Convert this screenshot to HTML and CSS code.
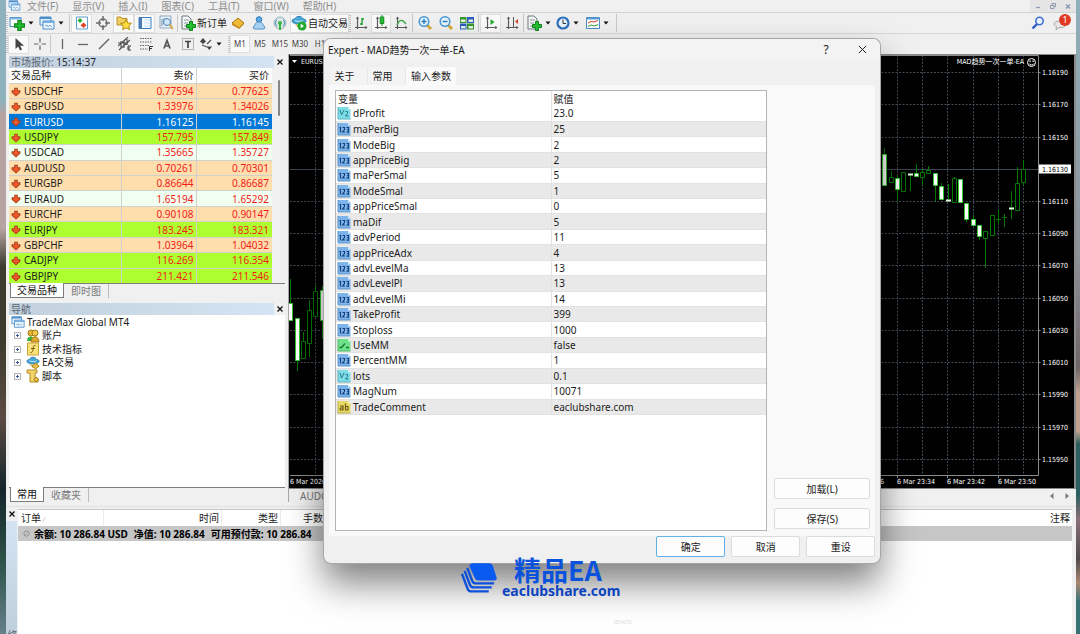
FILE: index.html
```html
<!DOCTYPE html>
<html lang="zh-CN">
<head>
<meta charset="utf-8">
<title>TradeMax Global MT4</title>
<link rel="stylesheet" href="styles.css">
</head>
<body>
<svg class="defs" aria-hidden="true">
  <symbol id="down" viewBox="0 0 10 10"><path d="M3.2.8h3.6v2.400h2.600v2.400L5 9.600.6 5.600V3.200h2.600z" fill="#a8421c"/><path d="M4 1.800h2v2.400h2.200v1L5 8.200 1.800 5.200v-1H4z" fill="#f0582a"/></symbol>
  <symbol id="int" viewBox="0 0 14 14"><path d="M1 1h10l2.500 2.500V13H1z" fill="#7db4ea"/><path d="M11 1l2.500 2.500H11z" fill="#d9edff"/><path d="M1 13h12.500M1 1v12" stroke="#5d94c8" fill="none"/><path d="M2.500 6l1-.6v5M5.500 5.500h2v2l-2 2.500h2.400M9.500 5.500h2v4.600h-2M10 7.700H11.500" stroke="#16407a" stroke-width="1.100" fill="none"/></symbol>
  <symbol id="dbl" viewBox="0 0 14 14"><path d="M1 1h10l2.500 2.500V13H1z" fill="#7fdbe6"/><path d="M11 1l2.500 2.500H11z" fill="#def9fc"/><path d="M1 13h12.500M1 1v12" stroke="#5bb4c0" fill="none"/><path d="M3 4l1.500 5L7 4M8.500 5.500h2v2l-2 2.500h3" stroke="#25808e" fill="none"/></symbol>
  <symbol id="bool" viewBox="0 0 14 14"><path d="M1 1h10l2.500 2.500V13H1z" fill="#6fe08a"/><path d="M11 1l2.500 2.500H11z" fill="#d9fbe0"/><path d="M1 13h12.500M1 1v12" stroke="#50b868" fill="none"/><path d="M2.500 9.500h2L8 5.500M9 9.500h3" stroke="#127a2e" stroke-width="1.300" fill="none"/></symbol>
  <symbol id="str" viewBox="0 0 14 14"><path d="M1 1h10l2.500 2.500V13H1z" fill="#e8d866"/><path d="M11 1l2.500 2.500H11z" fill="#fbf6cc"/><path d="M1 13h12.500M1 1v12" stroke="#bfae48" fill="none"/><path d="M3 6h3v4H3.500L3 9l.5-1H6M8.500 3.500V10H11V6.500H8.500" stroke="#6b5a10" stroke-width="1.200" fill="none"/></symbol>
  <symbol id="caret" viewBox="0 0 6 4"><path d="M.5.500h5L3 3.500z" fill="#111"/></symbol>
  <symbol id="plus" viewBox="0 0 10 10"><path d="M3.500.500h3v3h3v3h-3v3h-3v-3h-3v-3h3z" fill="#25c031" stroke="#0c8418"/></symbol>
  <symbol id="windows" viewBox="0 0 16 14"><path d="M1 1h11v8H1z" fill="#e4f0fb" stroke="#4d8fc9"/><path d="M1 1h11v2H1z" fill="#4d8fc9"/><path d="M4 5h11v8H4z" fill="#eef6fd" stroke="#4d8fc9"/><path d="M4 5h11v2H4z" fill="#76b0e3"/><path d="M6 10l2-1 1 2 2-2 2 2" stroke="#7aa7cf" fill="none"/></symbol>
  <symbol id="axes" viewBox="0 0 16 16"><path d="M4.500 3v11M2 12.500h11" stroke="#5b5b5b" stroke-width="1.200" fill="none"/><path d="M4.500 1.500l1.700 2.200h-3.400zM14.500 12.500l-2.200 1.700v-3.400z" fill="#5b5b5b"/></symbol>
  <symbol id="hat" viewBox="0 0 16 16"><path d="M1 6c0-2 3-2 3-2 1-3.500 7-3.500 8 0 0 0 3 0 3 2s-4 3-7 3-7-1-7-3z" fill="#4aa7d9" stroke="#277cae"/><path d="M4 5.500c2 1.200 6 1.200 8 0" stroke="#c8e8f8" fill="none"/><path d="M4 9l4 5 4-5-4 1z" fill="#d9b046"/></symbol>
  <symbol id="sheetplus" viewBox="0 0 16 16"><path d="M2 1h6l3 3v10H2z" fill="#f6f8f8" stroke="#6a7880"/><path d="M4 5h5M4 8h4M4 11h3" stroke="#8796a0"/><path d="M9.500 6.500h3v3h3v3h-3v3h-3v-3h-3v-3h3z" fill="#25c031" stroke="#0c8418"/></symbol>
</svg>

<div class="desktop">
<div class="app">
  <header>
    <nav class="menubar">
      <svg class="i14" viewBox="0 0 16 14"><use href="#windows"/></svg>
      <a href="#">文件(F)</a><a href="#">显示(V)</a><a href="#">插入(I)</a><a href="#">图表(C)</a><a href="#">工具(T)</a><a href="#">窗口(W)</a><a href="#">帮助(H)</a>
      <div class="mdi">
        <button aria-label="最小化"><svg viewBox="0 0 8 8"><path d="M2 5.500h4" stroke="#8c9bb0" stroke-width="1.200"/></svg></button>
        <button aria-label="还原"><svg viewBox="0 0 8 8"><path d="M1.500 3.500h3.500v3H1.500zM3 3V1.500h3.500v3H5" stroke="#8c9bb0" fill="none"/></svg></button>
        <button aria-label="关闭"><svg viewBox="0 0 8 8"><path d="M2 2.500l4 4m0-4l-4 4" stroke="#8c9bb0" stroke-width="1.500"/></svg></button>
      </div>
    </nav>

    <div class="toolbar main-tools">
      <span class="grip"></span>
      <button class="drop" aria-label="新图表"><svg class="i16" viewBox="0 0 16 16"><path d="M1 2.500h11v9H1z" fill="#fff" stroke="#3d86b8"/><path d="M1 2.500h11v2H1z" fill="#7ab4dd"/><use href="#plus" x="5" y="5" width="11" height="11"/></svg><svg class="car"><use href="#caret"/></svg></button>
      <button class="drop" aria-label="配置文件"><svg class="i16"><use href="#windows"/></svg><svg class="car"><use href="#caret"/></svg></button>
      <span class="sep"></span>
      <button class="tool on" aria-label="市场报价"><svg class="i14" viewBox="0 0 14 14"><path d="M1.500 1h11v12h-11z" fill="#fff" stroke="#5d9fd6"/><path d="M5 2l2.500 2.500L5 7 2.500 4.500z" fill="#27b02f"/><path d="M8.500 6.500l3 2.800-3 2.800-3-2.800z" fill="#e0452a"/></svg></button>
      <button class="tool" aria-label="数据窗口"><svg class="i14" viewBox="0 0 14 14"><circle cx="7" cy="7" r="4" stroke="#6c6c6c" stroke-width="1.500" fill="none"/><path d="M7 0v5M7 9v5M0 7h5M9 7h5" stroke="#6c6c6c" stroke-width="1.500"/></svg></button>
      <button class="tool on" aria-label="导航"><svg class="i16" viewBox="0 0 16 16"><path d="M1 2h4l1 1.500h5V10H1z" fill="#f2cf63" stroke="#b8912c"/><path d="M10 4.500l1.700 3.400 3.800.4-2.800 2.600.8 3.800-3.500-1.900-3.400 1.900.7-3.800-2.800-2.600 3.800-.4z" fill="#ffdc3c" stroke="#b58a14"/></svg></button>
      <button class="tool on" aria-label="终端"><svg class="i14" viewBox="0 0 14 14"><path d="M1 1.500h12v11H1z" fill="#f4f9ff" stroke="#3a7fc4"/><path d="M1 1.500h3v11H1z" fill="#4a78b4"/><path d="M6 4h6M6 7h6M6 10h6" stroke="#cfe2f5"/></svg></button>
      <button class="tool" aria-label="策略测试"><svg class="i16" viewBox="0 0 16 16"><path d="M2 1h11v12H2z" fill="#e9f1f8" stroke="#8fa8bd"/><path d="M4 11V4M6 9V3" stroke="#6b8dac"/><circle cx="9" cy="7" r="3.500" fill="#cfe6fa" stroke="#4c83b5"/><path d="M11.500 9.500L15 14" stroke="#d6a83e" stroke-width="2"/></svg></button>
      <span class="sep"></span>
      <button class="wide order"><svg class="i16"><use href="#sheetplus"/></svg>新订单</button>
      <button class="tool" aria-label="MetaEditor"><svg class="i14" viewBox="0 0 14 14"><path d="M1 7l6-5 6 5-5 5z" fill="#efb938" stroke="#a97412"/><path d="M1 7v2l7 4 5-5V7l-5 5z" fill="#c98e1c"/></svg></button>
      <button class="tool" aria-label="社区"><svg class="i14" viewBox="0 0 14 14"><circle cx="7" cy="3.500" r="2.800" fill="#5ea9e2" stroke="#2d78b8"/><path d="M3 9c0-4 8-4 8 0l2 2-1 2H2l-1-2z" fill="#a9d2f2" stroke="#5292c8"/></svg></button>
      <button class="tool" aria-label="信号"><svg class="i14" viewBox="0 0 14 14"><circle cx="7" cy="7" r="6" fill="#dce8ec" stroke="#9ab0ba"/><path d="M4 3.500a5 5 0 0 0 0 7M10 3.500a5 5 0 0 1 0 7" stroke="#4a8ab0" fill="none"/><circle cx="7" cy="7" r="2" fill="#3eb546"/><path d="M7 7v7" stroke="#3eb546" stroke-width="2"/></svg></button>
      <button class="wide on auto"><svg class="i16" viewBox="0 0 16 16"><use href="#hat"/><circle cx="11" cy="11" r="4.500" fill="#22a82e"/><path d="M9.700 8.800l3.300 2.200-3.300 2.200z" fill="#fff"/></svg>自动交易</button>
      <span class="grip"></span>
      <button class="tool slim" aria-label="柱状图"><svg class="i16" viewBox="0 0 16 16"><use href="#axes"/><path d="M9 3v7M9 4h2M7 9h2" stroke="#1fa02b" stroke-width="1.400"/></svg></button>
      <button class="tool slim on" aria-label="蜡烛图"><svg class="i16" viewBox="0 0 16 16"><use href="#axes"/><path d="M9 0v11" stroke="#168a22"/><path d="M7.200 2h3.600v6.500H7.200z" fill="#25c031" stroke="#168a22"/></svg></button>
      <button class="tool slim" aria-label="折线图"><svg class="i16" viewBox="0 0 16 16"><use href="#axes"/><path d="M4 10c3-7 6-5 9-1" stroke="#35a840" stroke-width="1.300" fill="none"/></svg></button>
      <span class="sep"></span>
      <button class="tool" aria-label="放大"><svg class="i16" viewBox="0 0 16 16"><path d="M10 10l4 4" stroke="#d8a93a" stroke-width="3"/><circle cx="7" cy="6.500" r="4.800" fill="#e3f2fd" stroke="#4a98d8" stroke-width="1.500"/><path d="M4.500 6.500h5M7 4v5" stroke="#2c7fc4" stroke-width="1.400"/></svg></button>
      <button class="tool" aria-label="缩小"><svg class="i16" viewBox="0 0 16 16"><path d="M10 10l4 4" stroke="#d8a93a" stroke-width="3"/><circle cx="7" cy="6.500" r="4.800" fill="#e3f2fd" stroke="#4a98d8" stroke-width="1.500"/><path d="M4.500 6.500h5" stroke="#2c7fc4" stroke-width="1.400"/></svg></button>
      <button class="tool" aria-label="平铺"><svg class="i14" viewBox="0 0 14 14"><path d="M0 1h6.500v6H0z" fill="#35962c"/><path d="M7 1h7v6H7z" fill="#2c5cbc"/><path d="M0 7.500h6.500v6H0z" fill="#2c5cbc"/><path d="M7 7.500h7v6H7z" fill="#35962c"/><path d="M1 3.500h4.500v2.500H1zM8.500 3.500h4.500v2.500H8.500zM1 10h4.500v2.500H1zM8.500 10h4.500v2.500H8.500z" fill="#e4f2e0"/></svg></button>
      <span class="sep"></span>
      <button class="tool on" aria-label="自动滚动"><svg class="i16" viewBox="0 0 16 16"><use href="#axes"/><path d="M7.500 4v6l4-3z" fill="#1fae2c"/></svg></button>
      <button class="tool" aria-label="图表平移"><svg class="i16" viewBox="0 0 16 16"><use href="#axes"/><path d="M9.500 2v10" stroke="#555"/><path d="M11 6.500l3-2.500v5z" fill="#d0462a"/></svg></button>
      <span class="sep"></span>
      <button class="drop" aria-label="指标"><svg class="i16"><use href="#sheetplus"/></svg><svg class="car"><use href="#caret"/></svg></button>
      <button class="drop" aria-label="周期"><svg class="i14" viewBox="0 0 14 14"><circle cx="7" cy="7" r="5.500" fill="#e8f3fd" stroke="#2c70bd" stroke-width="2.200"/><path d="M7 3.500V7.500h3" stroke="#333" fill="none"/></svg><svg class="car"><use href="#caret"/></svg></button>
      <button class="drop" aria-label="模板"><svg class="i14" viewBox="0 0 14 14"><path d="M.5 1.500h13v11H.5z" fill="#fff" stroke="#4a8cc8"/><path d="M.5 1.500h13v2H.5z" fill="#5a9ad2"/><path d="M2 7l3-1.500 3 .5 4-1.500" stroke="#d0462a" fill="none"/><path d="M2 10.500l3-1.500 3 1 4-1.500" stroke="#309c3c" fill="none"/></svg><svg class="car"><use href="#caret"/></svg></button>
      <span class="sep"></span>
      <button class="tool search" aria-label="搜索"><svg class="i14" viewBox="0 0 14 14"><circle cx="8.500" cy="5" r="3.700" fill="#eaf2ff" stroke="#3f6fd0" stroke-width="1.600"/><path d="M6 8l-4.500 4.500" stroke="#2f5cc4" stroke-width="2.400"/></svg></button>
      <button class="tool chat" aria-label="消息"><svg class="i16" viewBox="0 0 16 16"><path d="M1 9c0-4 12-4 12 0 0 3.500-4.500 4-7 3.500l-3 2.500.5-3.500C2 11 1 10.200 1 9z" fill="#e6e6e6" stroke="#a8a8a8"/></svg><span class="badge">1</span></button>
    </div>

    <div class="toolbar line-tools">
      <span class="grip"></span>
      <button class="tool on" aria-label="光标"><svg class="i14" viewBox="0 0 14 14"><path d="M3.500 1v11l2.700-2.500 1.800 4 2-.9-1.800-3.900H12z" fill="#444"/></svg></button>
      <button class="tool" aria-label="十字线"><svg class="i14" viewBox="0 0 14 14"><path d="M7 1v4.500M7 8.500V13M1 7h4.500M8.500 7H13" stroke="#666" stroke-width="1.200"/></svg></button>
      <span class="sep"></span>
      <button class="tool" aria-label="垂直线"><svg class="i14" viewBox="0 0 14 14"><path d="M7.500 2v10" stroke="#666" stroke-width="1.300"/></svg></button>
      <button class="tool" aria-label="水平线"><svg class="i14" viewBox="0 0 14 14"><path d="M2 7.500h10" stroke="#666" stroke-width="1.300"/></svg></button>
      <button class="tool" aria-label="趋势线"><svg class="i14" viewBox="0 0 14 14"><path d="M2 12L12 2" stroke="#666" stroke-width="1.400"/></svg></button>
      <button class="tool" aria-label="通道"><svg class="i14" viewBox="0 0 14 14"><path d="M0 9L10 0M1 13L12 3M3 4v7M6 3v8M9 2v6M0 6h10" stroke="#555" stroke-width="1.200"/><path d="M13 9h-3v4h3M10 11h2" stroke="#333" fill="none"/></svg></button>
      <button class="tool" aria-label="斐波那契"><svg class="i14" viewBox="0 0 14 14"><path d="M1 1.500h12M1 5h12M1 8.500h9M1 12h8" stroke="#666" stroke-dasharray="1.500 1"/><path d="M10.500 14V9.500H14M10.500 11.500H13" stroke="#333" fill="none"/></svg></button>
      <button class="tool" aria-label="文字"><svg class="i14" viewBox="0 0 14 14"><path d="M4 11.500L7 3.500l3 8M5 9h4" stroke="#555" stroke-width="1.700" fill="none"/></svg></button>
      <button class="tool" aria-label="文字标签"><svg class="i14" viewBox="0 0 14 14"><path d="M1.500 1.500h11v11h-11z" stroke="#777" stroke-dasharray="1 1" fill="none"/><path d="M4 4.500h6M7 4.500V11" stroke="#444" stroke-width="1.700"/></svg></button>
      <button class="drop" aria-label="箭头"><svg class="i14" viewBox="0 0 14 14"><path d="M1 4.500L4 1l3 3.500L4 7z" fill="#444"/><path d="M7.500 9.500h5.500L10.200 13z" fill="#444"/><path d="M3 8l5 2M8 7l4-4" stroke="#555" stroke-width="1.300"/></svg><svg class="car"><use href="#caret"/></svg></button>
      <span class="grip"></span>
      <button class="period on">M1</button><button class="period">M5</button><button class="period">M15</button><button class="period">M30</button><button class="period">H1</button>
    </div>
  </header>

  <main class="work">
    <aside class="side">
      <div class="title"><h2>市场报价: <b>15:14:37</b></h2><button class="close" aria-label="关闭市场报价"><svg viewBox="0 0 6 6"><path d="M.5.500l5 5m0-5l-5 5" stroke="#111" stroke-width="1.300"/></svg></button></div>
      <div class="watch">
        <table class="quotes">
          <thead><tr><th>交易品种</th><th>卖价</th><th>买价</th></tr></thead>
          <tbody>
            <tr class="tan"><td><svg><use href="#down"/></svg>USDCHF</td><td>0.77594</td><td>0.77625</td></tr>
            <tr class="tan"><td><svg><use href="#down"/></svg>GBPUSD</td><td>1.33976</td><td>1.34026</td></tr>
            <tr class="sel"><td><svg><use href="#down"/></svg>EURUSD</td><td>1.16125</td><td>1.16145</td></tr>
            <tr class="lime"><td><svg><use href="#down"/></svg>USDJPY</td><td>157.795</td><td>157.849</td></tr>
            <tr class="mint"><td><svg><use href="#down"/></svg>USDCAD</td><td>1.35665</td><td>1.35727</td></tr>
            <tr class="tan"><td><svg><use href="#down"/></svg>AUDUSD</td><td>0.70261</td><td>0.70301</td></tr>
            <tr class="tan"><td><svg><use href="#down"/></svg>EURGBP</td><td>0.86644</td><td>0.86687</td></tr>
            <tr class="mint"><td><svg><use href="#down"/></svg>EURAUD</td><td>1.65194</td><td>1.65292</td></tr>
            <tr class="tan"><td><svg><use href="#down"/></svg>EURCHF</td><td>0.90108</td><td>0.90147</td></tr>
            <tr class="lime"><td><svg><use href="#down"/></svg>EURJPY</td><td>183.245</td><td>183.321</td></tr>
            <tr class="tan"><td><svg><use href="#down"/></svg>GBPCHF</td><td>1.03964</td><td>1.04032</td></tr>
            <tr class="lime"><td><svg><use href="#down"/></svg>CADJPY</td><td>116.269</td><td>116.354</td></tr>
            <tr class="lime"><td><svg><use href="#down"/></svg>GBPJPY</td><td>211.421</td><td>211.546</td></tr>
          </tbody>
        </table>
        <div class="scroll"><span></span></div>
      </div>
      <div class="tabs"><button class="tab cur">交易品种</button><button class="tab">即时图</button></div>

      <div class="title nav-title"><h2>导航</h2><button class="close" aria-label="关闭导航"><svg viewBox="0 0 6 6"><path d="M.5.500l5 5m0-5l-5 5" stroke="#111" stroke-width="1.300"/></svg></button></div>
      <div class="tree">
        <div class="root"><svg class="i14"><use href="#windows"/></svg>TradeMax Global MT4</div>
        <ul>
          <li><span class="exp"></span><svg class="i14" viewBox="0 0 14 14"><circle cx="5" cy="4" r="3" fill="#e3b53a" stroke="#a87c14"/><path d="M1 12c0-6 7-6 8 0z" fill="#36b03c"/><circle cx="9" cy="4" r="3" fill="#f0c94e" stroke="#a87c14"/><path d="M5 13c0-7 8-7 8 0z" fill="#dca82c" stroke="#a87c14"/></svg>账户</li>
          <li><span class="exp"></span><svg class="i14" viewBox="0 0 14 14"><path d="M1.500 1h11v12h-11z" fill="#f8e27a" stroke="#c9a236"/><path d="M9.500 3.500C7 3 7.500 5 7 7s-.5 4-2.500 3.500M5 6.500h4" stroke="#7a5a10" fill="none"/></svg>技术指标</li>
          <li><span class="exp"></span><svg class="i14" viewBox="0 0 16 16"><use href="#hat"/><path d="M11 8l4 3.500-4 3.500-4-3.500z" fill="#e9c04a" stroke="#a87c14"/></svg>EA交易</li>
          <li><span class="exp"></span><svg class="i14" viewBox="0 0 14 14"><path d="M1 1h10v3H9v6h3v3H4V4H1z" fill="#f3d468" stroke="#b38b24"/><path d="M10 8l3 2.500-3 2.500-2-2.500z" fill="#e9c04a" stroke="#a87c14"/></svg>脚本</li>
        </ul>
      </div>
      <div class="tabs"><button class="tab cur">常用</button><button class="tab">收藏夹</button></div>
    </aside>

    <section class="charts">
      <div class="chart">
        <svg class="plot" viewBox="289 55 785 433" width="785" height="433" role="img" aria-label="EURUSD M1">
          <g stroke="#424c56" stroke-dasharray="2 1.500" fill="none">
            <path d="M290 72.500h748M290 104.500h748M290 137.500h748M290 201.500h748M290 233.500h748M290 265.500h748M290 298.500h748M290 330.500h748M290 362.500h748M290 394.500h748M290 427.500h748M290 459.500h748"/>
            <path d="M315.500 55v420M897.500 55v420M922.500 55v420M947.500 55v420M973.500 55v420M998.500 55v420M1023.500 55v420"/>
          </g>
          <path d="M290 169.500h748" stroke="#3c4650" fill="none"/>
          <path d="M290 55.500h748.500V475.500H290M1038.500 72.500h2M1038.500 104.500h2M1038.500 137.500h2M1038.500 201.500h2M1038.500 233.500h2M1038.500 265.500h2M1038.500 298.500h2M1038.500 330.500h2M1038.500 362.500h2M1038.500 394.500h2M1038.500 427.500h2M1038.500 459.500h2M897.500 475v3M947.500 475v3M998.500 475v3" stroke="#8c8c8c" fill="none"/>
          <g stroke="#007a00" fill="none">
            <path d="M290.500 279v24M297.500 361v10M303.500 332v9M309.500 300v10M309.500 343v14M315.500 285v6M322.500 286v53M880.500 135v18M884.500 148v6M891.500 171v6M897.500 175v26M910.500 175v16M916.500 164v9M922.500 169v3M922.500 177v8M928.500 166v4M935.500 185v16M941.500 183v3M948.500 184v15M954.500 177v1M966.500 219v3M973.500 215v4M979.500 237v3M985.500 239v29M998.500 210v14M996 219.500h5M1004.500 214v13M1002 217.500h5M1011.500 191v28M1017.500 167v16M1023.500 160v9M1023.500 182v3"/>
          </g>
          <g fill="#000" stroke="#007a00">
            <path d="M301.500 341.500h4v17h-4zM307.500 310.500h4v33h-4zM313.500 291.500h4v25h-4zM889.500 177.500h4v5h-4zM901.500 172.500h4v19h-4zM920.500 172.500h4v5h-4zM926.500 170.500h4v3h-4zM952.500 178.500h4v24h-4zM983.500 231.500h4v7h-4zM990.500 215.500h4v20h-4zM1015.500 183.500h4v27h-4zM1021.500 169.500h4v13h-4z"/>
          </g>
          <g fill="#fff" stroke="#33c933">
            <path d="M288.500 303.500h4v17h-4zM295.500 318.500h4v42h-4zM320.500 290.500h4v30h-4zM882.500 154.500h4v31h-4zM895.500 178.500h4v11h-4zM914.500 173.500h4v3h-4zM933.500 173.500h4v12h-4zM939.500 186.500h4v13h-4zM958.500 179.500h4v23h-4zM964.500 203.500h4v16h-4zM971.500 219.500h4v6h-4zM977.500 225.500h4v11h-4z"/>
          </g>
          <path d="M908 174.500h5M946 200.500h5M1009 208.500h5" stroke="#dfffdf" stroke-width="2"/>
          <path d="M292 60h5l-2.500 3z" fill="#fff"/>
          <g class="axis">
            <text x="301" y="64">EURUSD,M1</text>
            <text x="1024" y="64" text-anchor="end">MAD趋势一次一单-EA</text>
            <text x="1042" y="75">1.16190</text><text x="1042" y="107">1.16170</text><text x="1042" y="140">1.16150</text>
            <text x="1042" y="204">1.16110</text><text x="1042" y="236">1.16090</text><text x="1042" y="268">1.16070</text>
            <text x="1042" y="301">1.16050</text><text x="1042" y="333">1.16030</text><text x="1042" y="365">1.16010</text>
            <text x="1042" y="397">1.15990</text><text x="1042" y="430">1.15970</text><text x="1042" y="462">1.15950</text>
            <text x="290" y="484">6 Mar 2026</text><text x="846" y="484">6 Mar 23:26</text>
            <text x="897" y="484">6 Mar 23:34</text><text x="947" y="484">6 Mar 23:42</text><text x="998" y="484">6 Mar 23:50</text>
          </g>
          <path d="M1039 164.500h32v9h-32z" fill="#fff"/><text class="now" x="1042" y="172">1.16130</text>
          <g fill="none" stroke="#fff"><circle cx="1031.500" cy="62.500" r="4"/><path d="M1029 63.500c1 2 4 2 5 0"/></g><path d="M1029.500 60.500h1.200v1.500h-1.200zM1032.500 60.500h1.200v1.500h-1.200z" fill="#fff"/>
        </svg>
      </div>
      <div class="chart-tabs"><a href="#">AUDCAD,M1</a><span class="arrows"><svg viewBox="0 0 24 8"><path d="M5.500 1v6L2 4zM17.500 1v6L21 4z" fill="#777"/></svg></span></div>
    </section>
  </main>

  <section class="terminal">
    <div class="rail"><button class="close" aria-label="关闭终端"><svg viewBox="0 0 6 6"><path d="M.5.500l5 5m0-5l-5 5" stroke="#111" stroke-width="1.300"/></svg></button><div class="rail-name">终端</div></div>
    <div class="orders">
      <div class="cols"><span class="c1">订单 <i>⁄</i></span><span class="c2">时间</span><span class="c3">类型</span><span class="c4">手数</span><span class="c5">注释</span></div>
      <div class="balance"><svg viewBox="0 0 8 8"><circle cx="4" cy="4" r="3" fill="#ccc" stroke="#8a8a8a"/><path d="M2.500 5.500l3-3" stroke="#8a8a8a"/></svg><span>余额: 10 286.84 USD</span><span>净值: 10 286.84</span><span>可用预付款: 10 286.84</span></div>
    </div>
  </section>
</div>
</div>

<div class="dialog" role="dialog" aria-labelledby="dlg-title">
  <div class="dlg-head"><h1 id="dlg-title">Expert - MAD趋势一次一单-EA</h1><button aria-label="帮助">?</button><button aria-label="关闭"><svg viewBox="0 0 10 10"><path d="M1 1l8 8M9 1L1 9" stroke="#222" stroke-width="1.100"/></svg></button></div>
  <div class="dlg-tabs"><button>关于</button><button>常用</button><button class="cur">输入参数</button></div>
  <div class="dlg-body">
    <div class="list">
      <table class="params">
        <thead><tr><th>变量</th><th>赋值</th></tr></thead>
        <tbody>
          <tr><td><svg><use href="#dbl"/></svg>dProfit</td><td>23.0</td></tr>
          <tr><td><svg><use href="#int"/></svg>maPerBig</td><td>25</td></tr>
          <tr><td><svg><use href="#int"/></svg>ModeBig</td><td>2</td></tr>
          <tr><td><svg><use href="#int"/></svg>appPriceBig</td><td>2</td></tr>
          <tr><td><svg><use href="#int"/></svg>maPerSmal</td><td>5</td></tr>
          <tr><td><svg><use href="#int"/></svg>ModeSmal</td><td>1</td></tr>
          <tr><td><svg><use href="#int"/></svg>appPriceSmal</td><td>0</td></tr>
          <tr><td><svg><use href="#int"/></svg>maDif</td><td>5</td></tr>
          <tr><td><svg><use href="#int"/></svg>advPeriod</td><td>11</td></tr>
          <tr><td><svg><use href="#int"/></svg>appPriceAdx</td><td>4</td></tr>
          <tr><td><svg><use href="#int"/></svg>advLevelMa</td><td>13</td></tr>
          <tr><td><svg><use href="#int"/></svg>advLevelPl</td><td>13</td></tr>
          <tr><td><svg><use href="#int"/></svg>advLevelMi</td><td>14</td></tr>
          <tr><td><svg><use href="#int"/></svg>TakeProfit</td><td>399</td></tr>
          <tr><td><svg><use href="#int"/></svg>Stoploss</td><td>1000</td></tr>
          <tr><td><svg><use href="#bool"/></svg>UseMM</td><td>false</td></tr>
          <tr><td><svg><use href="#int"/></svg>PercentMM</td><td>1</td></tr>
          <tr><td><svg><use href="#dbl"/></svg>lots</td><td>0.1</td></tr>
          <tr><td><svg><use href="#int"/></svg>MagNum</td><td>10071</td></tr>
          <tr><td><svg><use href="#str"/></svg>TradeComment</td><td>eaclubshare.com</td></tr>
        </tbody>
      </table>
    </div>
    <div class="files"><button class="btn">加载(L)</button><button class="btn">保存(S)</button></div>
  </div>
  <div class="dlg-foot"><button class="btn primary">确定</button><button class="btn">取消</button><button class="btn">重设</button></div>
</div>

<div class="brand">
  <svg viewBox="60 65 115 95"><path d="M97 68h52q7 0 10 7l12 37q1 8-6 8h-50q-7 0-10-7L89 78q-2-8 8-10z" fill="#0a5af0"/><g fill="none" stroke="#0a50dc" stroke-width="7"><path d="M82 82l15 39q3 8 11 8h55"/><path d="M74 91l16 42q3 8 11 8h55"/><path d="M66 100l17 45q3 8 11 8h53"/></g></svg>
  <div><strong>精品EA</strong><span>eaclubshare.com</span></div>
</div>
<div class="mark">IEXAITE</div>
</body>
</html>
```
FILE: styles.css
```css
* { box-sizing: border-box; }
body {
  margin: 0;
  min-height: 100vh;
  overflow: hidden;
  font: 10px/14px "Noto Sans", "Noto Sans CJK SC", sans-serif;
  color: #1c1c1c;
}
button {
  margin: 0;
  padding: 0;
  border: 0;
  background: none;
  font: inherit;
  color: inherit;
}
a { color: inherit; text-decoration: none; }
h1, h2 { margin: 0; font: inherit; }
svg { flex: none; display: block; }
.defs { display: none; }
.i14 { width: 14px; height: 14px; }
.i16 { width: 16px; height: 16px; }

.desktop {
  height: 100vh;
  padding: 0 4px 0 6px;
  display: flex;
  background:
    linear-gradient(#8fb1bb 0 16%, #b7a4a2 18% 36%, #3d3c2e 42% 54%, #5b4a42 66%, #16262c 77%, #2c5046 88%, #64808a) left / 6px 100% no-repeat,
    linear-gradient(#8fb0bc, #8e9299 40%, #6e6468 58%, #c0a28e 62% 68%, #2c5f60 70% 78%, #8c6f78 82%, #4d4a4c 88%, #a98670 92%, #347276 95%) right / 4px 100% no-repeat;
}
.app {
  flex: 1;
  min-width: 0;
  display: flex;
  flex-direction: column;
  background: #f0f0f0;
}

/* menu and toolbars */
.menubar {
  height: 13px;
  padding-left: 2px;
  display: flex;
  align-items: flex-start;
  line-height: 12px;
  border-bottom: 1px solid #d2d2d2;
  color: #8d8d8d;
}
.menubar > svg { width: 13px; height: 11px; }
.menubar a { margin: 0 8px 0 6px; }
.mdi {
  margin-left: auto;
  width: 46px;
  height: 12px;
  display: flex;
  justify-content: space-around;
  align-items: center;
  background: #e5e5e5;
}
.mdi button, .mdi svg { width: 8px; height: 8px; }
.toolbar {
  height: 21px;
  display: flex;
  align-items: center;
  white-space: nowrap;
}
.main-tools { border-bottom: 1px solid #d6d6d6; }
.line-tools { height: 20px; }
.grip {
  width: 2px;
  height: 17px;
  background: repeating-linear-gradient(#c2c2c2 0 1px, #f0f0f0 1px 2px);
}
.sep { width: 1px; height: 18px; margin: 0 1px; background: #c8c8c8; }
.line-tools .sep { margin: 0; }
.tool {
  width: 21px;
  height: 19px;
  display: flex;
  align-items: center;
  justify-content: center;
}
.slim { width: 20px; }
.drop {
  width: 30px;
  height: 19px;
  padding-left: 1px;
  display: flex;
  align-items: center;
  gap: 3px;
}
.car { width: 6px; height: 4px; }
.on { background: #fafafa; box-shadow: inset 0 0 0 1px #dedede; }
.wide { height: 19px; display: flex; align-items: center; gap: 1px; }
.order { padding-left: 1px; }
.auto { padding: 0 1px; }
.search { margin-left: auto; }
.chat { position: relative; margin: 0 5px 0 2px; }
.badge {
  position: absolute;
  right: 0;
  top: 0;
  width: 12px;
  height: 12px;
  border-radius: 6px;
  background: #e03a24;
  color: #fff;
  font-size: 9px;
  line-height: 12px;
}
.period {
  width: 20px;
  height: 18px;
  font-size: 8px;
  color: #444;
}

/* left column */
.work { display: flex; }
.side {
  width: 283px;
  padding: 1px 3px 0;
  border-right: 1px solid #a8a8a8;
}
.title { height: 13px; display: flex; align-items: center; }
.title h2 {
  flex: 1;
  padding-left: 2px;
  line-height: 12px;
  color: #5a6672;
  background: linear-gradient(90deg, #c2d0de, #d5e4f2);
}
.title b { color: #1e242c; font-weight: 400; }
.close { width: 11px; height: 12px; display: grid; place-items: center; }
.close svg { width: 6px; height: 6px; }
.nav-title { margin-top: 4px; }
.watch {
  height: 215px;
  display: flex;
  overflow: hidden;
  background: #fff;
}
.quotes {
  flex: 1;
  height: 216px;
  table-layout: fixed;
  border-collapse: collapse;
}
.quotes th, .quotes td {
  height: 15px;
  padding: 0 3px 0 0;
  line-height: 14px;
  text-align: right;
  font-weight: 400;
  border: 0 solid #d0d0cc;
  border-width: 0 0 1px 1px;
}
.quotes th:first-child, .quotes td:first-child {
  width: 112px;
  text-align: left;
  padding-left: 2px;
  border-left: 0;
}
.quotes td { color: #f21c1c; }
.quotes td:first-child { color: #1c1c1c; }
.quotes svg {
  display: inline-block;
  vertical-align: middle;
  width: 10px;
  height: 10px;
  margin: 0 3px 1px 0;
}
.tan { background: #ffdead; }
.lime { background: #adff2f; }
.mint { background: #f0fff0; }
.sel { background: #0078d7; }
.quotes .sel td { color: #fff; }
.scroll { width: 13px; padding: 12px 0 0 6px; background: #f0f0f0; }
.scroll span { display: block; width: 2px; height: 36px; border-radius: 1px; background: #858585; }
.tabs {
  height: 15px;
  padding-left: 1px;
  display: flex;
  border-top: 1px solid #7c7c7c;
}
.tab {
  padding: 0 7px;
  height: 14px;
  line-height: 13px;
  color: #7c7c7c;
  border-right: 1px solid #bdbdbd;
}
.tab.cur {
  margin-top: -1px;
  padding: 0 6px;
  height: 15px;
  color: #111;
  background: #fff;
  border: 1px solid #7c7c7c;
  border-top: 0;
}
.tree { height: 172px; background: #fff; }
.root { height: 14px; padding-left: 2px; display: flex; align-items: center; gap: 2px; }
.tree ul { margin: 0; padding: 0 0 0 5px; list-style: none; }
.tree li { height: 13px; line-height: 13px; display: flex; align-items: center; gap: 2px; }
.tree li:nth-child(even) { height: 14px; }
.exp {
  width: 7px;
  height: 7px;
  margin-right: 3px;
  border: 1px solid #b4b4b4;
  background:
    linear-gradient(#3c5a9c, #3c5a9c) center / 3px 1px no-repeat,
    linear-gradient(#3c5a9c, #3c5a9c) center / 1px 3px no-repeat,
    #fff;
}

/* charts */
.charts { flex: 1; min-width: 0; }
.chart {
  height: 435px;
  display: flex;
  justify-content: flex-end;
  overflow: hidden;
  background: #000;
  border: solid #8a8a8a;
  border-width: 1px 2px 1px 0;
}
.axis text, .now {
  font: 7px "DejaVu Sans Condensed", "DejaVu Sans", "Noto Sans CJK SC", sans-serif;
  fill: #fff;
}
.axis .now, .now { fill: #000; }
.chart-tabs {
  height: 13px;
  padding: 0 4px 0 11px;
  display: flex;
  justify-content: space-between;
  align-items: center;
  color: #777;
}
.arrows svg { width: 24px; height: 8px; }

/* terminal */
.terminal {
  flex: 1;
  min-height: 0;
  margin-top: 4px;
  padding-right: 4px;
  display: flex;
  border-top: 1px solid #e2e2e2;
}
.rail { width: 11px; display: flex; flex-direction: column; }
.rail .close { height: 14px; }
.rail-name {
  flex: 1;
  margin-bottom: -16px;
  text-align: right;
  writing-mode: vertical-rl;
  line-height: 11px;
  color: #5a6672;
  background: linear-gradient(#d5e4f2, #bccbd8);
}
.orders { flex: 1; margin: 2px 0 0 1px; background: #fff; border-top: 1px solid #c6c6c6; }
.cols { height: 16px; display: flex; line-height: 16px; }
.cols span { border-right: 1px solid #ececec; text-align: right; padding-right: 2px; }
.cols i { color: #aaa; font-size: 7px; }
.cols .c1 { width: 86px; text-align: left; padding-left: 3px; }
.cols .c2 { width: 118px; }
.cols .c3 { width: 59px; }
.cols .c4 { width: 45px; }
.cols .c5 { flex: 1; border: 0; }
.balance {
  height: 15px;
  padding-left: 5px;
  display: flex;
  align-items: center;
  gap: 6px;
  font-weight: 700;
  color: #000;
  background: #c6c6c6;
}
.balance svg { width: 7px; height: 7px; margin-right: -2px; }

/* dialog */
.dialog {
  position: absolute;
  left: 30%;
  top: 39px;
  width: 51.5%;
  display: flex;
  flex-direction: column;
  border-radius: 7px;
  background: #f0f0f0;
  box-shadow: 0 0 0 1px #a6a6a6, 0 20px 36px rgba(0, 0, 0, .5);
}
.dlg-head {
  height: 21px;
  padding: 0 4px;
  display: flex;
  align-items: center;
  border-radius: 7px 7px 0 0;
  background: #f3f3f3;
}
.dlg-head h1 { flex: 1; }
.dlg-head button { width: 44px; height: 20px; display: grid; place-items: center; font-size: 12px; }
.dlg-head button:last-child { width: 28px; }
.dlg-head svg { width: 9px; height: 9px; }
.dlg-tabs { height: 25px; padding: 7px 6px 0; display: flex; }
.dlg-tabs button { width: 38px; padding-right: 8px; background: #f3f3f3; border-right: 1px solid #e8e8e8; line-height: 18px; }
.dlg-tabs .cur { width: 50px; padding: 0; background: #fafafa; border: 0; }
.dlg-body {
  margin: 0 5px;
  padding: 5px 5px 5px 6px;
  display: flex;
  gap: 7px;
  background: #f9f9f9;
}
.list { flex: 1; height: 441px; background: #fff; border: 1px solid #b4b4b4; }
.params { width: 100%; height: 324px; table-layout: fixed; border-collapse: collapse; }
.params th, .params td {
  height: 15px;
  padding: 0 0 0 2px;
  line-height: 14px;
  text-align: left;
  font-weight: 400;
}
.params th:first-child, .params td:first-child {
  width: 50%;
  border-right: 1px solid #e2e2e2;
}
.params td:first-child { padding-left: 1px; }
.params tbody tr:nth-child(even) { background: #e9e9e9; }
.params td { border-bottom: 1px solid #e2e2e2; }
.params svg { display: inline-block; vertical-align: top; width: 14px; height: 14px; margin-right: 2px; }
.files { width: 96px; padding-bottom: 2px; display: flex; flex-direction: column; justify-content: flex-end; gap: 9px; }
.btn { height: 21px; border: 1px solid #dcdcdc; border-radius: 2px; background: #fdfdfd; }
.dlg-foot { padding: 0 5px 6px; display: flex; justify-content: flex-end; gap: 6px; }
.dlg-foot .btn { width: 69px; }
.dlg-foot .btn.primary { border-color: #62b0ea; }

/* brand overlay */
.brand {
  position: absolute;
  left: 460px;
  top: 556px;
  display: flex;
  align-items: center;
  gap: 4px;
  color: #0b52dc;
}
.brand svg { width: 38px; height: 32px; margin-top: 2px; }
.brand div { display: flex; flex-direction: column; align-items: flex-start; }
.brand strong { padding-left: 12px; font: 700 27px/28px "Noto Sans CJK SC", sans-serif; }
.brand span { font: 700 14px/14px "Noto Sans", sans-serif; color: #0b44c0; }
.mark { position: absolute; left: 614px; top: 618px; font-size: 5px; line-height: 8px; color: #ddd; }
```
